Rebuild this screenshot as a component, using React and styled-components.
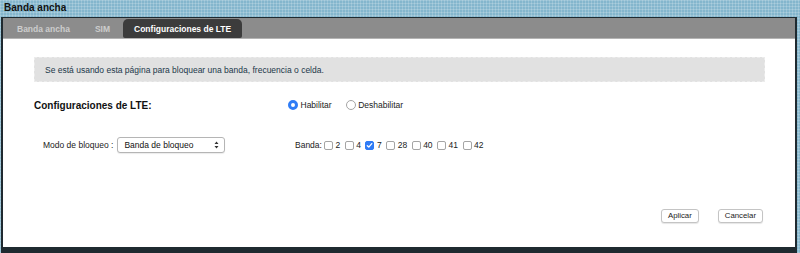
import React from 'react'
import styled, { createGlobalStyle } from 'styled-components'

const GlobalStyle = createGlobalStyle`
  *, *::before, *::after {
    box-sizing: border-box;
  }
  html, body {
    margin: 0;
    padding: 0;
  }
  body {
    width: 800px;
    height: 253px;
    overflow: hidden;
    font-family: "Liberation Sans", Arial, sans-serif;
    background-color: #84b6cd;
    background-image:
      repeating-linear-gradient(0deg, rgba(255,255,255,0.18) 0 1px, transparent 1px 3px),
      repeating-linear-gradient(90deg, rgba(255,255,255,0.18) 0 1px, transparent 1px 3px);
  }
`

const Page = styled.div`
  display: flex;
  flex-direction: column;
  width: 800px;
  height: 253px;
`

const PageTitle = styled.div`
  height: 17px;
  padding-left: 4px;
  font-size: 10px;
  font-weight: bold;
  line-height: 16px;
  color: #111;
`

const Panel = styled.div`
  display: flex;
  flex-direction: column;
  width: 796px;
  height: 236px;
  margin-left: 1px;
  border: 2px solid #1f2a30;
  border-top-width: 1px;
  border-bottom-width: 6px;
  background: #fff;
`

const TabBar = styled.div`
  display: flex;
  align-items: stretch;
  height: 21px;
  padding: 1px 0 0 2px;
  background: #8c8c8c;
  border-bottom: 1px solid #b4b4b4;
`

const Tab = styled.div`
  display: flex;
  align-items: center;
  padding: 0 ${(p) => (p.$active ? '11px' : '12px')};
  font-size: 8.5px;
  font-weight: bold;
  color: ${(p) => (p.$active ? '#fff' : '#cdcdcd')};
  background: ${(p) => (p.$active ? '#3c3c3c' : 'transparent')};
  border-radius: ${(p) => (p.$active ? '5px 5px 2px 2px' : '0')};
  margin-right: ${(p) => (p.$active ? '0' : '1px')};
`

const Content = styled.div`
  flex: 1;
  display: flex;
  flex-direction: column;
  padding: 18px 30px 0 31px;
`

const Notice = styled.div`
  height: 25px;
  display: flex;
  align-items: center;
  padding-left: 10px;
  background: #e1e1e1;
  border: 1px dashed #ececec;
  font-size: 8.5px;
  color: #22384a;
`

const Row = styled.div`
  display: grid;
  grid-template-columns: 254px 1fr;
  align-items: center;
  height: ${(p) => p.$h}px;
  margin-top: ${(p) => p.$top}px;
  font-size: 8.5px;
  color: #222;
`

const SectionLabel = styled.div`
  font-size: 10px;
  font-weight: bold;
  color: #111;
`

const Options = styled.div`
  display: flex;
  align-items: center;
  gap: ${(p) => p.$gap || 0}px;
`

const Option = styled.label`
  display: flex;
  align-items: center;
  gap: ${(p) => p.$gap || 2.5}px;
  color: #222;
`

const RadioDot = styled.span`
  width: 10px;
  height: 10px;
  border-radius: 50%;
  border: ${(p) => (p.$on ? '3.2px solid #2f7cf6' : '1px solid #a5a5a5')};
  background: #fff;
`

const Box = styled.span`
  display: flex;
  align-items: center;
  justify-content: center;
  width: 9px;
  height: 9px;
  border-radius: 2px;
  border: 1px solid ${(p) => (p.$on ? '#2f7cf6' : '#a5a5a5')};
  background: ${(p) => (p.$on ? '#2f7cf6' : '#fff')};
`

const ModeCell = styled.div`
  display: flex;
  align-items: center;
  gap: 4px;
  padding-left: 9px;
`

const Select = styled.div`
  display: flex;
  align-items: center;
  justify-content: space-between;
  width: 108px;
  height: 16px;
  padding: 0 5px 0 6px;
  border: 1px solid #b5b5b5;
  border-radius: 3px;
  background: #fff;
  box-shadow: 0 1px 1px rgba(0, 0, 0, 0.08);
  font-size: 8.5px;
  color: #111;
`

const BandLabel = styled.span`
  margin-left: 7px;
  margin-right: -2.5px;
`

const Actions = styled.div`
  display: flex;
  justify-content: flex-end;
  gap: 19px;
  margin-top: 56px;
  padding-right: 2px;
`

const Button = styled.button`
  height: 14px;
  padding: 0 6px;
  font-family: inherit;
  font-size: 7.8px;
  line-height: 12px;
  color: #222;
  background: #fff;
  border: 1px solid #c4c4c4;
  border-radius: 3px;
  box-shadow: 0 1px 1px rgba(0, 0, 0, 0.1);
`

const Check = () => (
  <svg width="7" height="7" viewBox="0 0 8 8">
    <path d="M1.5 4.2 L3.2 5.8 L6.6 1.8" fill="none" stroke="#fff" strokeWidth="1.5" strokeLinecap="round" strokeLinejoin="round" />
  </svg>
)

const Updown = () => (
  <svg width="5" height="8" viewBox="0 0 5 8">
    <path d="M0.5 3 L2.5 0.6 L4.5 3 Z M0.5 5 L2.5 7.4 L4.5 5 Z" fill="#333" />
  </svg>
)

const bands = [
  { n: '2' },
  { n: '4' },
  { n: '7', on: true },
  { n: '28' },
  { n: '40' },
  { n: '41' },
  { n: '42' },
]

export default function App() {
  return (
    <Page>
      <GlobalStyle />
      <PageTitle>Banda ancha</PageTitle>
      <Panel>
        <TabBar>
          <Tab>Banda ancha</Tab>
          <Tab>SIM</Tab>
          <Tab $active>Configuraciones de LTE</Tab>
        </TabBar>
        <Content>
          <Notice>Se está usando esta página para bloquear una banda, frecuencia o celda.</Notice>
          <Row $top={17} $h={12}>
            <SectionLabel>Configuraciones de LTE:</SectionLabel>
            <Options $gap={14}>
              <Option $gap={2.5}><RadioDot $on />Habilitar</Option>
              <Option $gap={2.5}><RadioDot />Deshabilitar</Option>
            </Options>
          </Row>
          <Row $top={26} $h={16}>
            <ModeCell>
              Modo de bloqueo :
              <Select>Banda de bloqueo<Updown /></Select>
            </ModeCell>
            <Options $gap={4.5}>
              <BandLabel>Banda:</BandLabel>
              {bands.map((b) => (
                <Option key={b.n}>
                  <Box $on={b.on}>{b.on && <Check />}</Box>
                  {b.n}
                </Option>
              ))}
            </Options>
          </Row>
          <Actions>
            <Button>Aplicar</Button>
            <Button>Cancelar</Button>
          </Actions>
        </Content>
      </Panel>
    </Page>
  )
}
